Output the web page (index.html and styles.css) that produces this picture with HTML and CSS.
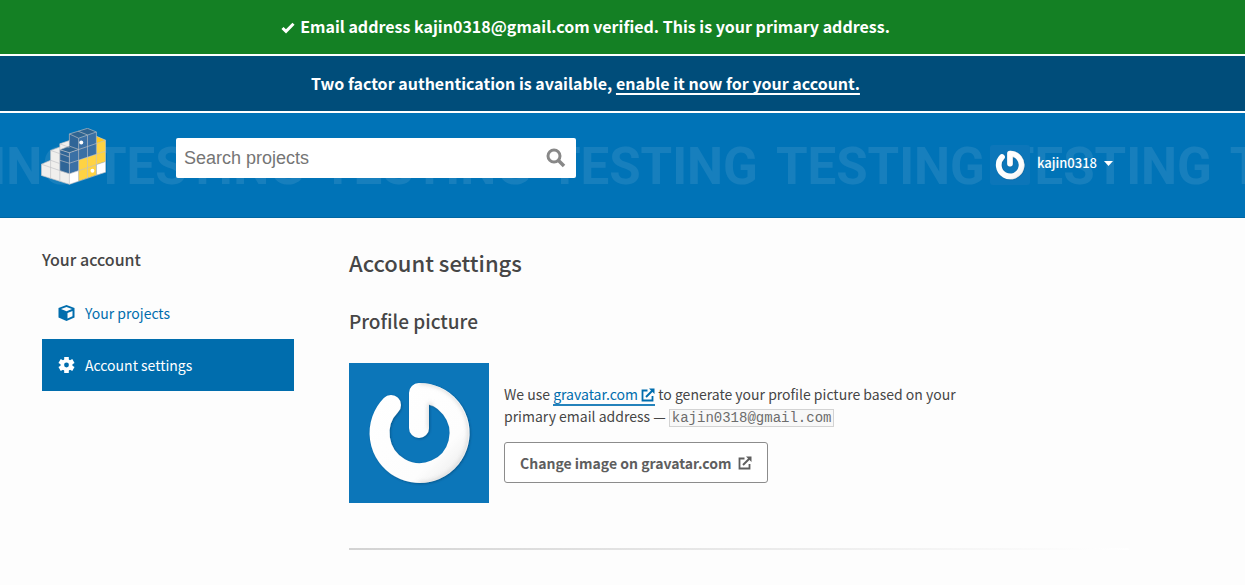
FILE: index.html
```html
<!DOCTYPE html>
<html lang="en">
<head>
<meta charset="utf-8">
<meta name="viewport" content="width=device-width, initial-scale=1">
<title>Account settings · PyPI</title>
<link rel="stylesheet" href="styles.css">
</head>
<body>
<svg class="sprite" aria-hidden="true">
  <defs>
    <linearGradient id="shade" x1="0" y1="0" x2="1" y2="1">
      <stop offset="0" stop-color="#fff"/><stop offset=".75" stop-color="#fdfdfd"/><stop offset="1" stop-color="#eee"/>
    </linearGradient>
    <filter id="soft" x="-20%" y="-20%" width="140%" height="140%"><feDropShadow dx="1" dy="1" stdDeviation="1" flood-color="#003a66" flood-opacity=".5"/></filter>
    <filter id="blur" x="-20%" y="-20%" width="140%" height="140%"><feGaussianBlur stdDeviation="2"/></filter>
    <clipPath id="ring"><path d="M70 20a50 50 0 1 1-35.500 14.500a10 10 0 0 1 14.500 14.500A30 30 0 1 0 80 42V65a10 10 0 0 1-20 0V30a10 10 0 0 1 10-10z"/></clipPath>
  </defs>
  <symbol id="gravatar" viewBox="0 0 140 140">
    <rect width="140" height="140" fill="#0c76b9"/>
    <path d="M70 65V30A40 40 0 1 1 42 42" fill="none" stroke="url(#shade)" stroke-width="20" stroke-linecap="round" stroke-linejoin="round" filter="url(#soft)"/>
    <g clip-path="url(#ring)"><path d="M81 40V66M70 19A51 51 0 0 1 70 121" fill="none" stroke="#c9c9c9" stroke-width="4" opacity=".75" filter="url(#blur)"/></g>
  </symbol>
  <symbol id="external" viewBox="0 0 14 14">
    <path d="M6.500 2.500H1.500V12.500H11.500V8" fill="none" stroke="currentColor" stroke-width="1.800"/>
    <path d="M5 9L11.500 2.500" fill="none" stroke="currentColor" stroke-width="2"/>
    <path d="M8 0.500H13.500V6z" fill="currentColor"/>
  </symbol>
</svg>

<div class="banner banner-success" role="status">
  <p class="banner-text"><svg class="check" viewBox="0 0 14 12" aria-hidden="true"><path d="M1.500 6L5 9.300L12.500 1.800" fill="none" stroke="currentColor" stroke-width="3"/></svg>Email address kajin0318@gmail.com verified. This is your primary address.</p>
</div>
<div class="banner banner-info">
  <p class="banner-text">Two factor authentication is available, <a href="#two-factor">enable it now for your account.</a></p>
</div>

<header class="header">
  <div class="watermark" aria-hidden="true"><span>TESTING</span><span>TESTING</span><span>TESTING</span><span>TESTING</span><span>TESTING</span><span>TESTING</span><span>TESTING</span></div>
  <div class="container header-row">
    <a class="logo" href="#home" aria-label="PyPI">
      <svg viewBox="32 23 197 173" width="65" height="57" stroke-linejoin="round">
        <path fill="#f0efed" d="M33 167V133L61 121V91L89 81V71L118 61L146 70V184L118 194z"/>
        <path fill="#fff" d="M118 162L146 152V184L118 194zM200 134L228 125V157L200 166z"/>
        <path fill="#ffd343" d="M146 120L200 102V48L228 60V125L200 134V166L146 184z"/>
        <path fill="#ffc91d" d="M200 48L228 60L200 70z"/>
        <path fill="#2f6491" d="M89 89L117 78L118 41L173 24L200 35L146 53V88L118 98z"/>
        <path fill="#3a70a5" d="M146 54L200 35V102L146 120V152L118 162V98L146 88z"/>
        <path fill="#2f6597" d="M89 89L118 98V162L89 153zM118 41L146 54V88L118 78z"/>
        <g fill="none" stroke="#bfc1c5" stroke-width="2">
          <path d="M33 133L118 162L228 125M33 133V167L118 194L228 157V60L200 48M61 91L118 111M61 121V176M61 121L89 131M61 121V91L89 81M33 133L61 121M89 71V185M89 71L118 61M89 71L118 82M89 121L118 130L228 93M118 98V194M89 89L118 98L200 70L228 60M89 89L118 78L146 88M118 78V41L173 24L200 35L146 54L118 41M146 54V184M173 45V175M200 35V166M145 33L173 44"/>
        </g>
        <circle cx="154" cy="67" r="6" fill="#fff"/><circle cx="188" cy="153" r="6" fill="#fff"/>
      </svg>
    </a>
    <form class="search" role="search">
      <label class="hidden" for="q">Search PyPI</label>
      <input id="q" type="text" placeholder="Search projects">
      <button type="button" aria-label="Search"><svg viewBox="0 0 20 20" width="20" height="20" fill="none" stroke="currentColor"><circle cx="8" cy="8" r="6" stroke-width="3"/><path d="M12.500 12.500L18 18" stroke-width="3.500"/></svg></button>
    </form>
    <button class="user" type="button" aria-haspopup="true">
      <svg class="avatar" width="40" height="40" aria-hidden="true"><use href="#gravatar"/></svg>
      <span>kajin0318</span>
      <svg width="9" height="5" viewBox="0 0 9 5" aria-hidden="true"><path d="M0 0H9L4.500 5z" fill="currentColor"/></svg>
    </button>
  </div>
</header>

<div class="container layout">
  <nav class="sidebar" aria-labelledby="nav-title">
    <h2 class="side-title" id="nav-title">Your account</h2>
    <ul>
      <li><a href="#projects"><svg width="17" height="16" viewBox="0 0 17 16" aria-hidden="true"><path fill="currentColor" d="M8.500 0L16.500 3V12.500L8.500 16L.5 12.500V3z"/><path fill="#fdfdfd" d="M8.500 2L14 4L8.500 6.300L3 4zM9.500 8L14.500 6V11.300L9.500 13.600z"/></svg>Your projects</a></li>
      <li><a class="current" href="#settings" aria-current="page"><svg width="17" height="16" viewBox="0 0 17 16" aria-hidden="true"><g stroke="currentColor" stroke-width="4.600"><path d="M8.500 0V16M1.600 4L15.400 12M1.600 12L15.400 4"/></g><circle cx="8.500" cy="8" r="6" fill="currentColor"/><circle cx="8.500" cy="8" r="2.400" fill="#006dad"/></svg>Account settings</a></li>
    </ul>
  </nav>
  <main class="content">
    <h1>Account settings</h1>
    <section>
      <h2 class="section-title">Profile picture</h2>
      <div class="profile">
        <svg class="picture" width="140" height="140" role="img" aria-label="Gravatar for kajin0318"><use href="#gravatar"/></svg>
        <div class="profile-text">
          <p>We use <a class="link" href="#gravatar">gravatar.com <svg class="ext" aria-hidden="true"><use href="#external"/></svg></a> to generate your profile picture based on your primary email address — <code>kajin0318@gmail.com</code></p>
          <a class="button" href="#change">Change image on gravatar.com<svg class="ext" aria-hidden="true"><use href="#external"/></svg></a>
        </div>
      </div>
    </section>
    <hr>
  </main>
</div>
</body>
</html>
```
FILE: styles.css
```css
*, *::before, *::after { box-sizing: border-box; }
body {
  margin: 0;
  background: #fdfdfd;
  color: #464646;
  font-family: "Noto Sans CJK SC", "Noto Sans", sans-serif;
  font-size: 14px;
  line-height: 22px;
}
h1, h2, p, ul { margin: 0; padding: 0; }
ul { list-style: none; }
.sprite { position: absolute; width: 0; height: 0; }
.hidden { position: absolute; width: 1px; height: 1px; overflow: hidden; clip-path: inset(50%); }

.banner { color: #fff; border-bottom: 2px solid #fff; }
.banner-success { background: #148024; }
.banner-info { background: #004d7a; }
.banner-text {
  max-width: 1171px;
  padding: 15px 40px 16px;
  text-align: center;
  font-size: 16px;
  font-weight: 600;
  line-height: 24px;
}
.banner-success .banner-text { padding: 14px 40px 16px; }
.banner a { color: #fff; text-decoration: underline; text-decoration-thickness: 2px; text-underline-offset: 3px; text-decoration-skip-ink: none; }
.check { width: 14px; height: 12px; margin-right: 5px; vertical-align: -1px; }

.container { max-width: 1170px; padding: 0 41px; }
.header { position: relative; background: #0073b7; border-bottom: 1px solid #0067a3; color: #fff; }
.watermark {
  position: absolute;
  inset: 0;
  display: flex;
  align-items: center;
  gap: 18px;
  padding-top: 3px;
  overflow: hidden;
  font: 700 51px/52px Roboto, sans-serif;
  color: rgba(255, 255, 255, .09);
}
.watermark span:first-child { margin-left: -132px; }
.header-row { position: relative; display: flex; align-items: flex-end; padding-top: 15px; padding-bottom: 32px; }
.logo, .logo svg { display: block; }
.search { display: flex; flex: 0 1 400px; height: 40px; margin: 0 auto 7px 70px; background: #fff; border-radius: 2px; }
.search input {
  flex: 1;
  min-width: 0;
  padding: 0 8px;
  border: 0;
  background: none;
  font: 18px "Liberation Sans", Arial, sans-serif;
}
.search input::placeholder { color: #757575; opacity: 1; }
.search button { display: flex; align-items: center; padding: 0 10px; border: 0; background: none; color: #888; }
.user {
  display: flex;
  align-items: center;
  padding: 0 16px 0 0;
  border: 0;
  background: none;
  color: #fff;
  font: 500 13px/22px "Noto Sans CJK SC", sans-serif;
}
.user span { margin: 0 7px 4px; }
.user svg:last-child { margin-bottom: 3px; }
.avatar { border-radius: 3px; }

.layout { display: flex; gap: 55px; padding-top: 29px; padding-left: 42px; }
.sidebar { flex: 0 0 252px; }
.side-title { margin-bottom: 16px; font-size: 16px; font-weight: 500; line-height: 24px; }
.sidebar a { display: flex; align-items: center; gap: 10px; height: 52px; padding: 0 16px; color: #006dad; text-decoration: none; }
.sidebar .current { background: #006dad; color: #fff; }
.content { flex: 1; min-width: 0; }
h1 { font-size: 22px; font-weight: 500; line-height: 30px; }
.section-title { margin: 32px 0 30px; font-size: 19px; font-weight: 500; line-height: 24px; }
.profile { display: flex; align-items: center; gap: 15px; }
.picture { flex: none; }
.profile-text { max-width: 480px; }
.profile-text p { margin-bottom: 15px; }
.link { color: #006dad; text-decoration: none; border-bottom: 2px solid #2482bb; }
.ext { width: 14px; height: 14px; vertical-align: -2px; }
code {
  padding: 0 2px;
  border: 1px solid #d3d3d3;
  background: #f8f8f8;
  color: #6c6c6c;
  font: 14px "Liberation Mono", monospace;
}
.button {
  display: inline-flex;
  align-items: center;
  gap: 7px;
  height: 41px;
  padding: 1px 15px 0;
  border: 1px solid #8c8c8c;
  border-radius: 3px;
  background: #fff;
  color: #5e5e5e;
  font-weight: 600;
  text-decoration: none;
}
hr { height: 2px; margin: 45px 0 0; border: 0; background: linear-gradient(to right, #d3d3d3, #fff); }
```
